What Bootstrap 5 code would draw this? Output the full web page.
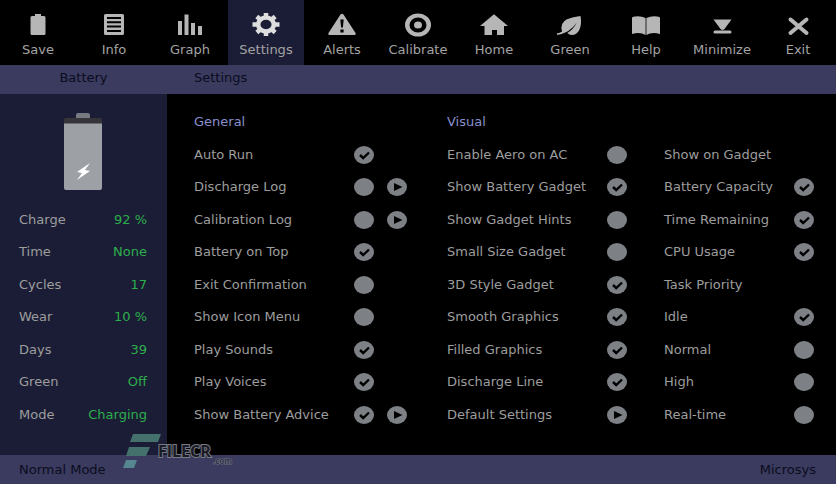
<!DOCTYPE html>
<html lang="en">
<head>
<meta charset="utf-8">
<meta name="viewport" content="width=device-width, initial-scale=1">
<title>Battery Settings</title>
<link href="https://cdn.jsdelivr.net/npm/bootstrap@5.3.0/dist/css/bootstrap.min.css" rel="stylesheet">
<style>
body{background:#000;color:#9d9d9d;font-family:"DejaVu Sans",Verdana,sans-serif;font-size:13px;line-height:16px}
.tool{display:flex;flex-direction:column;align-items:center;justify-content:flex-start;flex:1 1 0;min-width:0;height:65px;color:#a3a3a3;padding:12px 0 0;font-size:13px;line-height:16px;background:none;border:0}
.tool svg{display:block;flex:none;margin:0 0 5px;width:30px;height:25px;fill:#b6b6b6}
.tool.current{background:#1b1d36}
.tool.current svg{fill:#dedede}
.strip{background:#3a3b5e;color:#0b0c20;min-height:29px}
.side{width:167px;background:#1b1d36;padding:12px 20px 24px 19px}
.strip-side{width:167px}
.strip-main{padding-left:27px}
.strip-foot{padding:0 20px 0 19px}
.stack{display:grid;grid-template-rows:repeat(10,minmax(28px,1fr))}
.cell-span{grid-row:span 3}
.value{color:#2cae4b}
.panel{display:grid;grid-template-columns:253fr 217fr 150fr;padding:12px 22px 24px 27px}
.opt{display:grid;grid-template-columns:1fr 20px;column-gap:13px;align-items:center}
.wide-opts .opt{grid-template-columns:1fr 20px 20px}
.wide-opts{padding-right:40px}
.mid-opts{padding-right:37px}
.opt label,.opt span,.opt h2{white-space:nowrap;min-width:0}
.opt h2{font-size:13px;line-height:16px;margin:0;color:#8890cd;font-weight:400}
.dot{appearance:none;display:block;width:20px;height:18px;margin:0;padding:0;border:0;border-radius:50%;background:#7d8186 center/20px 18px no-repeat}
.dot:checked{background-image:url("data:image/svg+xml,%3Csvg xmlns='http://www.w3.org/2000/svg' viewBox='0 0 20 18'%3E%3Cpath d='M6 9l3.2 3L15 6.5' fill='none' stroke='%23000' stroke-width='2.4'/%3E%3C/svg%3E")}
.play{background-image:url("data:image/svg+xml,%3Csvg xmlns='http://www.w3.org/2000/svg' viewBox='0 0 20 18'%3E%3Cpath d='M7 5l8.5 4L7 13z'/%3E%3C/svg%3E")}
.stamp{position:absolute;left:122px;bottom:14px;width:116px;height:38px;pointer-events:none}
</style>
</head>
<body>
<div class="d-flex flex-column min-vh-100 position-relative">
<nav class="d-flex" aria-label="Main">
<button class="tool" type="button"><svg viewBox="0 0 30 25"><path d="M12 4V2h6v2h3q1.500 0 1.500 1.500v16Q22.500 23 21 23H9q-1.500 0-1.500-1.500v-16Q7.500 4 9 4z"/></svg>Save</button>
<button class="tool" type="button"><svg viewBox="0 0 30 25"><path fill-rule="evenodd" d="M6.500 2h17Q25 2 25 3.500v18q0 1.500-1.500 1.500h-17Q5 23 5 21.500v-18Q5 2 6.500 2zM8 5v2h14V5zM8 9.200v2h14v-2zM8 13.500v2h14v-2zM8 18v2h14v-2z"/></svg>Info</button>
<button class="tool" type="button"><svg viewBox="0 0 30 25"><path d="M3 9h4v14H3zM9.500 2.500h4V23h-4zM16 11h4v12h-4zM23 14h4v9h-4z"/></svg>Graph</button>
<button class="tool current" type="button" aria-current="page"><svg viewBox="0 0 30 25"><ellipse cx="15" cy="12.500" rx="7.800" ry="7" fill="none" stroke="#dedede" stroke-width="4.500"/><path d="M15 1v5M15 19v5M1.500 12.500h5M23.500 12.500h5M5.800 4.500l3.500 3M20.700 17.500l3.500 3M24.200 4.500l-3.500 3M9.300 17.500l-3.500 3" stroke="#dedede" stroke-width="4.500"/></svg>Settings</button>
<button class="tool" type="button"><svg viewBox="0 0 30 25"><path fill-rule="evenodd" d="M13.500 2.500Q15 1 16.500 2.500L28.500 21q.8 2-1.500 2H3q-2.300 0-1.500-2zM13.300 7.500l.8 8h1.800l.8-8zM13.400 17.500v3h3.200v-3z"/></svg>Alerts</button>
<button class="tool" type="button"><svg viewBox="0 0 30 25"><path fill-rule="evenodd" d="M15 1.500a13 11.500 0 1 0 0 23a13 11.500 0 1 0 0-23zM15 5.500a8.500 7.500 0 1 1 0 15a8.500 7.500 0 1 1 0-15z"/><ellipse cx="15" cy="13" rx="4" ry="3.500"/></svg>Calibrate</button>
<button class="tool" type="button"><svg viewBox="0 0 30 25"><path d="M15 2.300L29 14h-4v9h-7v-5h-5v5H5.500v-9H1z"/></svg>Home</button>
<button class="tool" type="button"><svg viewBox="0 0 30 25"><path d="M25.500 4q1.500 8-1.200 14-2.600 5-7.500 5-2.500 0-4.500-2 6-3.500 9.500-10.500-5 7-11 9.800-4 2.300-8.500 2.700l-.5-1.500q3-.5 5.300-2Q4.500 11 12 7.300 16 5.500 25.500 4z"/></svg>Green</button>
<button class="tool" type="button"><svg viewBox="0 0 30 25"><path d="M1 6q0-1 1.200-1.200Q9 3.500 14.600 6v17Q9 19.500 1 22zM15.400 6Q21 3.500 27.800 4.800 29 5 29 6v16q-8-2.500-13.600 1z"/></svg>Help</button>
<button class="tool" type="button"><svg viewBox="0 0 30 25"><path d="M6.500 7.500h18L17.500 17q-2 2-4 0zM8 18.500h15q1.500 0 1.500 1.500T23 21.500H8Q6.500 21.500 6.500 20T8 18.500z"/></svg>Minimize</button>
<button class="tool" type="button"><svg viewBox="0 0 30 25"><path d="M7.500 7.500l16 13.500M23.500 7.500l-16 13.500" stroke="#b6b6b6" stroke-width="4" stroke-linecap="round"/></svg>Exit</button>
</nav>
<header class="strip d-flex align-items-center pb-1">
<div class="strip-side text-center">Battery</div>
<div class="strip-main">Settings</div>
</header>
<div class="d-flex flex-grow-1">
<aside class="side stack flex-shrink-0">
<div class="cell-span pt-1 text-center"><svg width="40" height="80" viewBox="0 0 40 80" role="img" aria-label="Battery charging"><path d="M13 8V5q0-2 2-2h10q2 0 2 2v3z" fill="#777a80"/><path d="M1 14V10q0-2 2-2h34q2 0 2 2v4z" fill="#353439"/><path d="M1 13.500h38V78q0 2-2 2H3q-2 0-2-2z" fill="#9da0a5"/><path d="M27 53l-13 9 5 1-5 7 13-9-5-1z" fill="#fff"/></svg></div>
<div class="d-flex justify-content-between align-items-center"><span>Charge</span><span class="value">92 %</span></div>
<div class="d-flex justify-content-between align-items-center"><span>Time</span><span class="value">None</span></div>
<div class="d-flex justify-content-between align-items-center"><span>Cycles</span><span class="value">17</span></div>
<div class="d-flex justify-content-between align-items-center"><span>Wear</span><span class="value">10 %</span></div>
<div class="d-flex justify-content-between align-items-center"><span>Days</span><span class="value">39</span></div>
<div class="d-flex justify-content-between align-items-center"><span>Green</span><span class="value">Off</span></div>
<div class="d-flex justify-content-between align-items-center"><span>Mode</span><span class="value">Charging</span></div>
</aside>
<main class="panel flex-grow-1">
<section class="stack wide-opts">
<div class="opt"><h2>General</h2></div>
<div class="opt"><label for="a1">Auto Run</label><input class="dot" type="checkbox" id="a1" checked></div>
<div class="opt"><label for="a2">Discharge Log</label><input class="dot" type="checkbox" id="a2"><button class="dot play" type="button" aria-label="Open discharge log"></button></div>
<div class="opt"><label for="a3">Calibration Log</label><input class="dot" type="checkbox" id="a3"><button class="dot play" type="button" aria-label="Open calibration log"></button></div>
<div class="opt"><label for="a4">Battery on Top</label><input class="dot" type="checkbox" id="a4" checked></div>
<div class="opt"><label for="a5">Exit Confirmation</label><input class="dot" type="checkbox" id="a5"></div>
<div class="opt"><label for="a6">Show Icon Menu</label><input class="dot" type="checkbox" id="a6"></div>
<div class="opt"><label for="a7">Play Sounds</label><input class="dot" type="checkbox" id="a7" checked></div>
<div class="opt"><label for="a8">Play Voices</label><input class="dot" type="checkbox" id="a8" checked></div>
<div class="opt"><label for="a9">Show Battery Advice</label><input class="dot" type="checkbox" id="a9" checked><button class="dot play" type="button" aria-label="Open battery advice"></button></div>
</section>
<section class="stack mid-opts">
<div class="opt"><h2>Visual</h2></div>
<div class="opt"><label for="b1">Enable Aero on AC</label><input class="dot" type="checkbox" id="b1"></div>
<div class="opt"><label for="b2">Show Battery Gadget</label><input class="dot" type="checkbox" id="b2" checked></div>
<div class="opt"><label for="b3">Show Gadget Hints</label><input class="dot" type="checkbox" id="b3"></div>
<div class="opt"><label for="b4">Small Size Gadget</label><input class="dot" type="checkbox" id="b4"></div>
<div class="opt"><label for="b5">3D Style Gadget</label><input class="dot" type="checkbox" id="b5" checked></div>
<div class="opt"><label for="b6">Smooth Graphics</label><input class="dot" type="checkbox" id="b6" checked></div>
<div class="opt"><label for="b7">Filled Graphics</label><input class="dot" type="checkbox" id="b7" checked></div>
<div class="opt"><label for="b8">Discharge Line</label><input class="dot" type="checkbox" id="b8" checked></div>
<div class="opt"><label for="b9">Default Settings</label><button class="dot play" type="button" id="b9"></button></div>
</section>
<section class="stack">
<div></div>
<div class="opt"><span>Show on Gadget</span></div>
<div class="opt"><label for="c2">Battery Capacity</label><input class="dot" type="checkbox" id="c2" checked></div>
<div class="opt"><label for="c3">Time Remaining</label><input class="dot" type="checkbox" id="c3" checked></div>
<div class="opt"><label for="c4">CPU Usage</label><input class="dot" type="checkbox" id="c4" checked></div>
<div class="opt"><span>Task Priority</span></div>
<div class="opt"><label for="c6">Idle</label><input class="dot" type="radio" name="priority" id="c6" checked></div>
<div class="opt"><label for="c7">Normal</label><input class="dot" type="radio" name="priority" id="c7"></div>
<div class="opt"><label for="c8">High</label><input class="dot" type="radio" name="priority" id="c8"></div>
<div class="opt"><label for="c9">Real-time</label><input class="dot" type="radio" name="priority" id="c9"></div>
</section>
</main>
</div>
<footer class="strip strip-foot d-flex justify-content-between align-items-center"><span>Normal Mode</span><span>Microsys</span></footer>
<svg class="stamp" viewBox="0 0 116 38"><path d="M11 2h28l-3 8H8z" fill="#44716c"/><path d="M7 15h21l-4 9H4z" fill="#44716c"/><path d="M4 28h11l-3 8H1z" fill="#568790"/><g font-family="Open Sans, sans-serif" font-weight="700" stroke="#777985" paint-order="stroke"><text x="36" y="25" font-size="16" fill="#1a1b25" stroke-width="2">FILECR</text><text x="91" y="32" font-size="8" fill="#30314a" stroke-width="1">.com</text></g></svg>
</div>
<script src="https://cdn.jsdelivr.net/npm/bootstrap@5.3.0/dist/js/bootstrap.bundle.min.js"></script>
</body>
</html>
